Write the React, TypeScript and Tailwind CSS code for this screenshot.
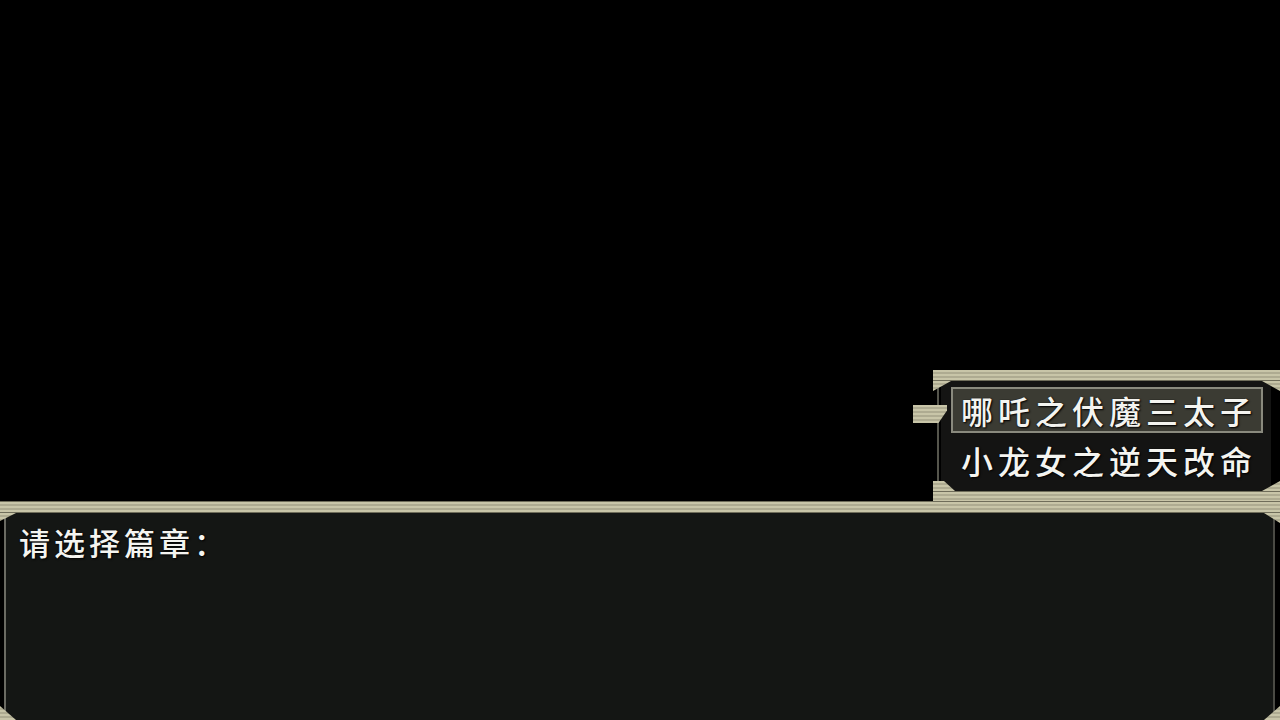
import React from "react";

const stripe =
  "bg-[repeating-linear-gradient(to_bottom,#c8c5a8_0px,#c8c5a8_2px,#aeab91_2px,#aeab91_4px)]";

function Corner({ className }: { className: string }) {
  return <div className={`absolute ${stripe} ${className}`} />;
}

const txt =
  "text-[#f4f4f0] [text-shadow:1px_1px_2px_#000,0_0_1px_#000] leading-none whitespace-nowrap font-medium";

function ChoiceBox() {
  return (
    <div className="relative w-[347px] h-[131px] flex flex-col">
      <div className={`h-[11px] ${stripe} border-b border-[#6f6d5a]`} />
      <div className="flex-1 flex flex-row bg-black">
        <div className="w-[4px]" />
        <div className="w-[2px] bg-[#55554c]" />
        <div className="w-[2px]" />
        <div className="flex-1 bg-[#141413] flex flex-col pt-[6px] pl-[10px] pr-[8px] gap-[4px]">
          <div className={`h-[46px] border-2 border-[#8a8a7e] bg-[#3b3b33] flex items-center pl-[8px] text-[32px] tracking-[5px] ${txt}`}>
            哪吒之伏魔三太子
          </div>
          <div className={`h-[46px] flex items-center pl-[10px] text-[32px] tracking-[5px] ${txt}`}>
            小龙女之逆天改命
          </div>
        </div>
        <div className="w-[9px] bg-black" />
      </div>
      <div className={`h-[10px] ${stripe} border-t border-[#6f6d5a]`} />
      <Corner className="left-0 top-[11px] w-[18px] h-[10px] [clip-path:polygon(0_0,100%_0,0_100%)]" />
      <Corner className="right-0 top-[11px] w-[18px] h-[10px] [clip-path:polygon(0_0,100%_0,100%_100%)]" />
      <Corner className="left-0 bottom-[10px] w-[22px] h-[10px] [clip-path:polygon(0_0,50%_0,100%_100%,0_100%)]" />
      <Corner className="right-0 bottom-[10px] w-[18px] h-[10px] [clip-path:polygon(100%_0,100%_100%,0_100%)]" />
      <Corner className="left-[-20px] top-[35px] w-[34px] h-[18px] [clip-path:polygon(0_0,100%_0,100%_30%,75%_100%,0_100%)]" />
    </div>
  );
}

function MessageWindow() {
  return (
    <div className="relative h-[219px] flex flex-col">
      <div className={`h-[12px] ${stripe} border-y border-[#6f6d5a]`} />
      <div className="flex-1 flex flex-row bg-black">
        <div className="w-[4px]" />
        <div className="w-[2px] bg-[#6a6a62]" />
        <div className="flex-1 bg-[#141614] pl-[13px] pt-[13px]">
          <div className={`text-[31px] tracking-[4px] ${txt}`}>请选择篇章：</div>
        </div>
        <div className="w-[2px] bg-[#4a4a44]" />
        <div className="w-[5px]" />
      </div>
      <Corner className="left-0 top-[12px] w-[16px] h-[8px] [clip-path:polygon(0_0,100%_0,0_100%)]" />
      <Corner className="right-0 top-[12px] w-[16px] h-[10px] [clip-path:polygon(0_0,100%_0,100%_100%)]" />
      <Corner className="left-0 bottom-0 w-[16px] h-[14px] [clip-path:polygon(0_0,100%_100%,0_100%)]" />
      <Corner className="right-0 bottom-0 w-[16px] h-[14px] [clip-path:polygon(100%_0,100%_100%,0_100%)]" />
    </div>
  );
}

export default function App() {
  return (
    <div
      className="w-[1280px] h-[720px] bg-black flex flex-col overflow-hidden"
      style={{ fontFamily: '"Noto Sans CJK SC", "Noto Sans", sans-serif' }}
    >
      <div className="flex-1 flex justify-end items-end">
        <ChoiceBox />
      </div>
      <MessageWindow />
    </div>
  );
}
